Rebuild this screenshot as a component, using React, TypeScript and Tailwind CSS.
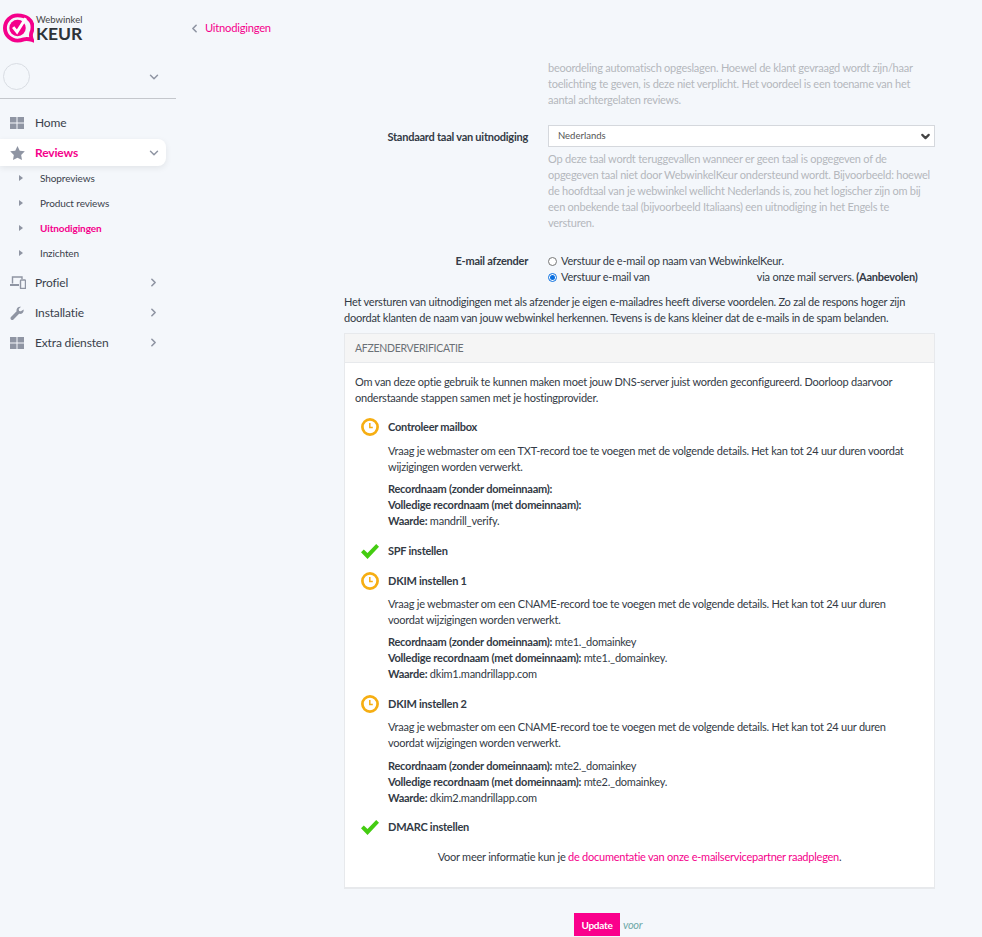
import type { ReactNode } from "react";
import { ChevronDown, ChevronLeft, ChevronRight } from "lucide-react";

function Grid() {
  return (
    <svg width="14" height="12" viewBox="0 0 14 12" fill="#8f95a3">
      <rect x="0" y="0" width="6.5" height="5.5" />
      <rect x="7.5" y="0" width="6.5" height="5.5" />
      <rect x="0" y="6.5" width="6.5" height="5.5" />
      <rect x="7.5" y="6.5" width="6.5" height="5.5" />
    </svg>
  );
}

function Star() {
  return (
    <svg width="15" height="14" viewBox="0 0 24 23" fill="#8f95a3">
      <path d="M12 0l3.7 7.6 8.3 1.2-6 5.900 1.400 8.300-7.400-3.900-7.400 3.900L6 14.700 0 8.800l8.300-1.200z" />
    </svg>
  );
}

function Devices() {
  return (
    <svg width="16" height="13" viewBox="0 0 16 13" fill="none" stroke="#8f95a3" strokeWidth="1.4">
      <path d="M2.500 7.500V1h9.500v2" />
      <path d="M0 9h9" strokeWidth="2" />
      <rect x="10.500" y="4" width="5" height="8.500" rx="0.600" />
    </svg>
  );
}

function Wrench() {
  return (
    <svg width="14" height="14" viewBox="0 0 14 14" fill="#8f95a3">
      <path d="M13.600 3.400c.3 1.300-.1 2.600-1 3.500-1 1-2.300 1.200-3.500.9l-5.600 5.600c-.7.700-1.800.7-2.500 0s-.7-1.800 0-2.500l5.600-5.600c-.3-1.200 0-2.600.9-3.500.9-1 2.200-1.300 3.500-1L8.700 3.100l.4 1.800 1.800.4z" />
    </svg>
  );
}

function Clock() {
  return (
    <svg width="18" height="18" viewBox="0 0 18 18" fill="none" stroke="#f6ae12">
      <circle cx="9" cy="9" r="7.600" strokeWidth="2.700" />
      <path d="M8.800 5v4.400h3" strokeWidth="1.500" />
    </svg>
  );
}

function Check() {
  return (
    <svg width="18" height="15" viewBox="0 0 18 15" fill="#44cc11">
      <path d="M0 8.200l2.800-2.700 3.700 3.600L15.200 0 18 2.800 6.500 15z" />
    </svg>
  );
}

function Logo() {
  return (
    <svg width="31" height="31" viewBox="0 0 32 32" fill="none" className="shrink-0">
      <path d="M15 2.500a13 13 0 1 0 0 26c2.500 0 4.500-.5 6.500-1.300 2.800-.7 5.500-.4 8.500.7-1.300-2.500-1.400-5-.8-7.400.9-2 1.300-3.900 1.300-5.800C30.500 7 24 2.500 15 2.500z" stroke="#f5008b" strokeWidth="4" />
      <circle cx="15" cy="15.500" r="8.500" fill="#f5008b" />
      <path d="M10.500 14.500l4 5 9-14" stroke="#fff" strokeWidth="3" />
    </svg>
  );
}

function NavItem({ icon, label, chevron }: { icon: ReactNode; label: string; chevron?: boolean }) {
  return (
    <div className="flex h-[27px] items-center pl-[10px] pr-[16px] text-[12px] tracking-[-0.15px] text-[#3a3f4b]">
      <span className="flex w-[25px] shrink-0 items-center">{icon}</span>
      <span className="flex-1">{label}</span>
      {chevron && <ChevronRight size={13} strokeWidth={3} className="text-[#8f95a3]" />}
    </div>
  );
}

function SubItem({ label, active }: { label: string; active?: boolean }) {
  return (
    <div className="flex h-[25px] items-center pl-[19px] text-[10px] tracking-[-0.1px]">
      <span className="mr-[17px] h-0 w-0 border-y-[3.500px] border-l-[4px] border-y-transparent border-l-[#8f95a3]" />
      <span className={active ? "font-bold text-[#f5008b]" : "text-[#3a3f4b]"}>{label}</span>
    </div>
  );
}

function Sidebar() {
  return (
    <aside className="w-[176px] shrink-0">
      <div className="flex h-[55px] items-center pl-[3px] pt-[1px]">
        <Logo />
        <div className="ml-[2px] tracking-normal">
          <div className="text-[9.500px] leading-[10px] text-[#444]">Webwinkel</div>
          <div className="text-[17.500px] leading-[17px] font-bold text-[#2d3338]">KEUR</div>
        </div>
      </div>
      <div className="flex h-[44px] items-center border-b border-[#c4c7cc] pl-[3px] pr-[15px]">
        <div className="h-[27px] w-[27px] rounded-full border border-[#d9dde3]" />
        <ChevronDown size={14} strokeWidth={2.500} className="ml-auto text-[#8f95a3]" />
      </div>
      <nav className="mt-[10px]">
        <NavItem icon={<Grid />} label="Home" />
        <div className="mr-[10px] mt-[3px] flex h-[27px] items-center rounded-r-[8px] bg-white pl-[10px] pr-[5px] text-[12px] font-bold tracking-[-0.15px] text-[#f5008b] shadow-[0_2px_6px_rgba(0,0,0,0.08)]">
          <span className="flex w-[25px] shrink-0 items-center"><Star /></span>
          <span className="flex-1">Reviews</span>
          <ChevronDown size={14} strokeWidth={2.500} className="text-[#8f95a3]" />
        </div>
        <div className="-mt-[1px]">
          <SubItem label="Shopreviews" />
          <SubItem label="Product reviews" />
          <SubItem label="Uitnodigingen" active />
          <SubItem label="Inzichten" />
        </div>
        <div className="mt-[4px]"><NavItem icon={<Devices />} label="Profiel" chevron /></div>
        <div className="mt-[3px]"><NavItem icon={<Wrench />} label="Installatie" chevron /></div>
        <div className="mt-[3px]"><NavItem icon={<Grid />} label="Extra diensten" chevron /></div>
      </nav>
    </aside>
  );
}

function StepTitle({ done, title, className }: { done?: boolean; title: string; className: string }) {
  return (
    <div className={`flex h-[16px] items-center font-bold ${className}`}>
      <span className="flex w-[43px] shrink-0 justify-start pl-[16px]">{done ? <Check /> : <Clock />}</span>
      {title}
    </div>
  );
}

function StepBody({ text, a, b, c, top, gap }: { text: string; a: string; b: string; c: string; top: string; gap: string }) {
  return (
    <div className="pl-[43px] pr-[20px]">
      <p className={top}>{text}</p>
      <div className={gap}>
        <div><b>Recordnaam (zonder domeinnaam):</b> {a}</div>
        <div><b>Volledige recordnaam (met domeinnaam):</b> {b}</div>
        <div><b>Waarde:</b> {c}</div>
      </div>
    </div>
  );
}

function Panel() {
  return (
    <section className="mt-[7px] h-[556px] border border-b-2 border-[#e7e9ec] bg-white">
      <div className="flex h-[29px] items-center border-b border-[#e7e9ec] bg-[#f5f5f5] pl-[10px] text-[10.500px] tracking-[-0.3px] text-[#6b7076]">AFZENDERVERIFICATIE</div>
      <div className="pt-[11px]">
        <p className="px-[10px]">Om van deze optie gebruik te kunnen maken moet jouw DNS-server juist worden geconfigureerd. Doorloop daarvoor onderstaande stappen samen met je hostingprovider.</p>
        <StepTitle title="Controleer mailbox" className="mt-[13px]" />
        <StepBody
          text="Vraag je webmaster om een TXT-record toe te voegen met de volgende details. Het kan tot 24 uur duren voordat wijzigingen worden verwerkt."
          a=""
          b=""
          c="mandrill_verify."
          top="mt-[8px]"
          gap="mt-[6px]"
        />
        <StepTitle done title="SPF instellen" className="mt-[14px]" />
        <StepTitle title="DKIM instellen 1" className="mt-[14px]" />
        <StepBody
          text="Vraag je webmaster om een CNAME-record toe te voegen met de volgende details. Het kan tot 24 uur duren voordat wijzigingen worden verwerkt."
          a="mte1._domainkey"
          b="mte1._domainkey."
          c="dkim1.mandrillapp.com"
          top="mt-[7px]"
          gap="mt-[6px]"
        />
        <StepTitle title="DKIM instellen 2" className="mt-[14px]" />
        <StepBody
          text="Vraag je webmaster om een CNAME-record toe te voegen met de volgende details. Het kan tot 24 uur duren voordat wijzigingen worden verwerkt."
          a="mte2._domainkey"
          b="mte2._domainkey."
          c="dkim2.mandrillapp.com"
          top="mt-[7px]"
          gap="mt-[7px]"
        />
        <StepTitle done title="DMARC instellen" className="mt-[13px]" />
        <p className="mt-[14px] text-center">
          Voor meer informatie kun je <span className="text-[#f5008b]">de documentatie van onze e-mailservicepartner raadplegen</span>.
        </p>
      </div>
    </section>
  );
}

export default function App() {
  return (
    <div className="flex h-[937px] overflow-hidden bg-[#f4f7fb] font-['Lato',sans-serif] text-[11px] leading-[16px] tracking-[-0.24px] text-[#333a45]">
      <Sidebar />
      <main className="flex-1">
        <div className="flex h-[56px] items-center pl-[12px] text-[11.200px] text-[#f5008b]">
          <ChevronLeft size={13} strokeWidth={3} className="mr-[4px] text-[#8f95a3]" />
          Uitnodigingen
        </div>
        <div className="ml-[168px] w-[591px]">
          <div className="ml-[204px] mt-[4px] text-[#b4b8bd]">
            <p>beoordeling automatisch opgeslagen. Hoewel de klant gevraagd wordt zijn/haar toelichting te geven, is deze niet verplicht. Het voordeel is een toename van het aantal achtergelaten reviews.</p>
          </div>
          <div className="mt-[17px] flex">
            <label className="w-[184px] pt-[4px] text-right font-bold">Standaard taal van uitnodiging</label>
            <div className="ml-[20px] flex-1">
              <div className="flex h-[22px] items-center justify-between border border-[#d5d8dd] bg-white pl-[9px] pr-[2px] text-[9.500px] tracking-normal text-[#555]">
                Nederlands
                <ChevronDown size={13} strokeWidth={4} className="text-[#444]" />
              </div>
              <p className="mt-[4px] text-[#b4b8bd]">Op deze taal wordt teruggevallen wanneer er geen taal is opgegeven of de opgegeven taal niet door WebwinkelKeur ondersteund wordt. Bijvoorbeeld: hoewel de hoofdtaal van je webwinkel wellicht Nederlands is, zou het logischer zijn om bij een onbekende taal (bijvoorbeeld Italiaans) een uitnodiging in het Engels te versturen.</p>
            </div>
          </div>
          <div className="mt-[22px] flex">
            <label className="w-[184px] text-right font-bold">E-mail afzender</label>
            <div className="ml-[20px] flex-1">
              <div className="flex h-[16px] items-center">
                <span className="mr-[4px] h-[9px] w-[9px] rounded-full border border-[#777] bg-white" />
                Verstuur de e-mail op naam van WebwinkelKeur.
              </div>
              <div className="flex h-[16px] items-center">
                <span className="mr-[4px] flex h-[9px] w-[9px] items-center justify-center rounded-full border border-[#0a6fe0] bg-white">
                  <span className="h-[5px] w-[5px] rounded-full bg-[#0a6fe0]" />
                </span>
                Verstuur e-mail van
                <span className="ml-[107px]">via onze mail servers. <b>(Aanbevolen)</b></span>
              </div>
            </div>
          </div>
          <p className="mt-[9px]">Het versturen van uitnodigingen met als afzender je eigen e-mailadres heeft diverse voordelen. Zo zal de respons hoger zijn doordat klanten de naam van jouw webwinkel herkennen. Tevens is de kans kleiner dat de e-mails in de spam belanden.</p>
          <Panel />
          <div className="mt-[24px] flex items-center pl-[230px]">
            <button className="h-[23px] w-[46px] bg-[#fa008c] text-[10px] font-bold text-white">Update</button>
            <i className="ml-[3px] text-[#6fa8a8]">voor</i>
          </div>
        </div>
      </main>
    </div>
  );
}
